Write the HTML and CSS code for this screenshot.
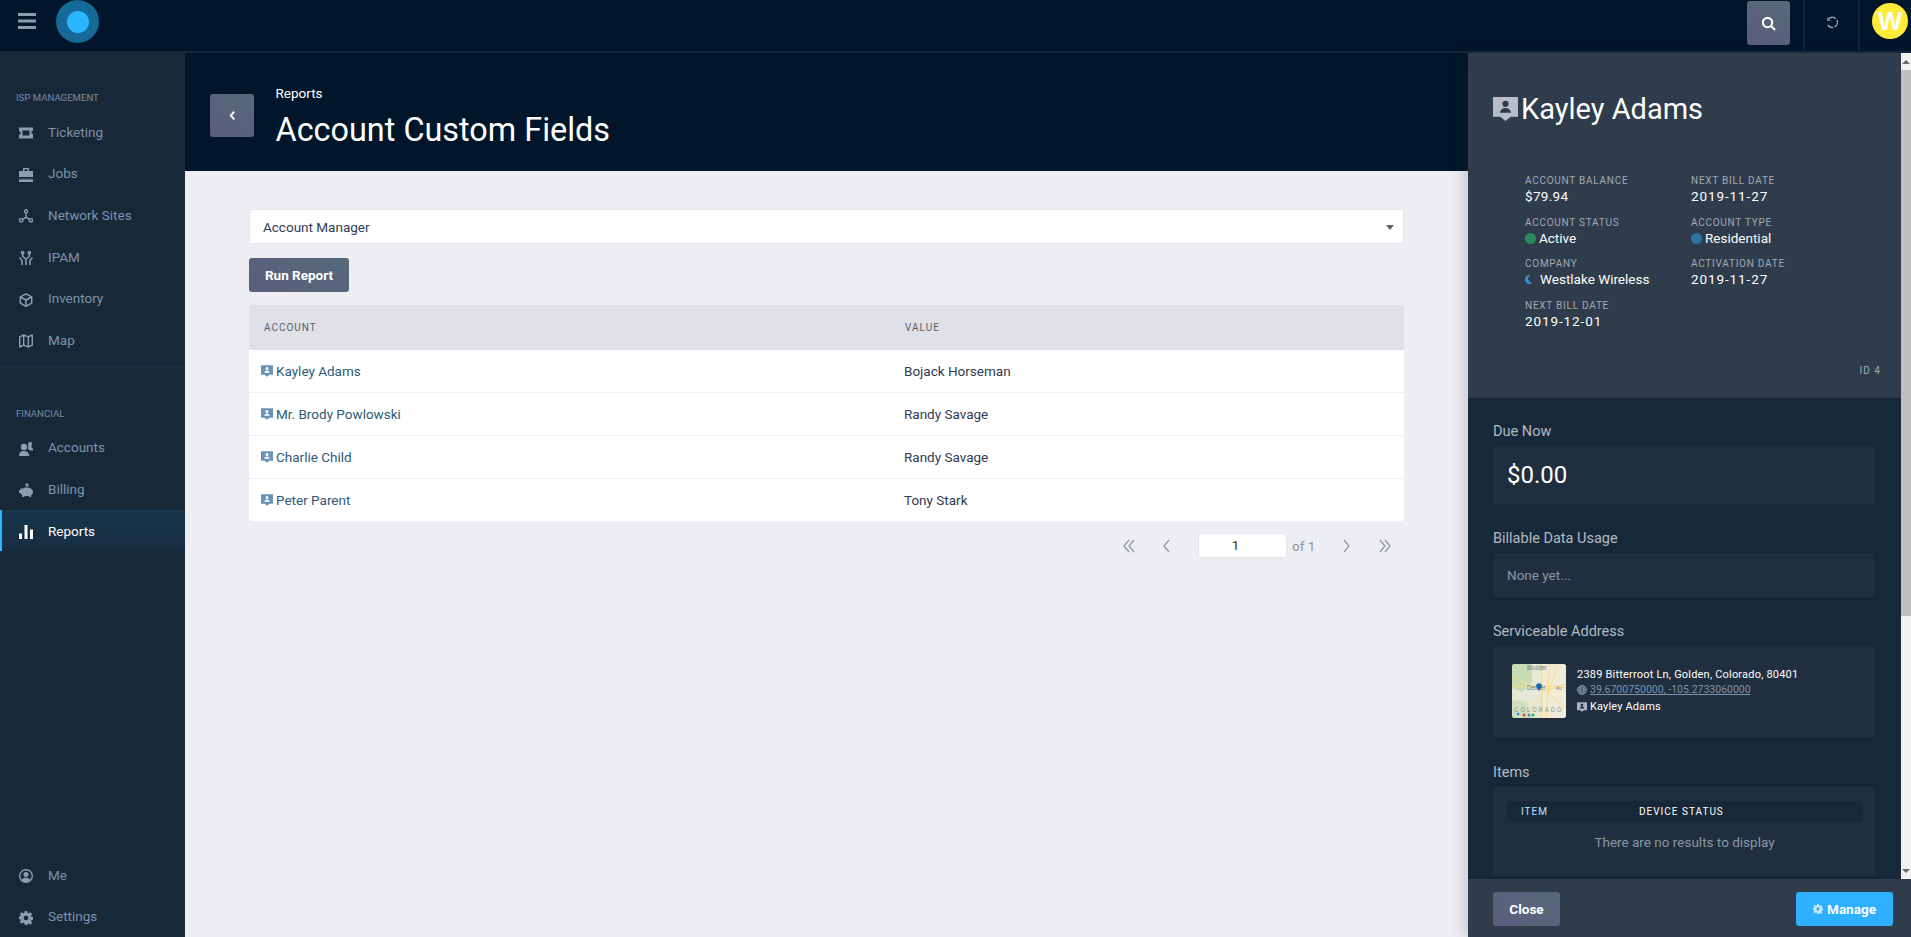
FILE: index.html
```html
<!DOCTYPE html>
<html lang="en">
<head>
<meta charset="utf-8">
<title>Account Custom Fields</title>
<link rel="stylesheet" href="styles.css">
</head>
<body>
<svg class="defs" width="0" height="0" aria-hidden="true">
  <symbol id="i-acct" viewBox="0 0 24 23"><path fill="currentColor" fill-rule="evenodd" d="M0 0h24v19h-7l-5 4-5-4H0zM12 3.500a3 3 0 1 0 0 6 3 3 0 0 0 0-6zM6.500 15h11c-.6-3-3-4.500-5.500-4.500S7.100 12 6.500 15z"/></symbol>
  <symbol id="i-gear" viewBox="0 0 16 16"><path fill="currentColor" fill-rule="evenodd" d="M6.500 0h3l.4 2.200 1.200.5L13 1.400l2.100 2.100-1.300 1.900.5 1.200 2.200.4v3l-2.200.4-.5 1.200 1.300 1.900-2.100 2.100-1.900-1.300-1.200.5L9.500 16h-3l-.4-2.200-1.200-.5L3 14.600.9 12.500l1.300-1.900-.5-1.200L-.5 9.500v-3l2.200-.4.5-1.200L.9 3.500 3 1.400l1.900 1.300 1.200-.5zM8 5.300a2.700 2.700 0 1 0 0 5.400 2.700 2.700 0 0 0 0-5.400z"/></symbol>
</svg>

<header class="topbar">
  <svg class="burger" viewBox="0 0 18 16"><path fill="#8d9db0" d="M0 0h18v3H0zM0 6.500h18v3H0zM0 13h18v3H0z"/></svg>
  <div class="logo"><span class="logo-core"></span></div>
  <div class="topbar-right">
    <button class="icon-btn grad">
      <svg viewBox="0 0 16 16" width="15" height="15"><circle cx="7" cy="7" r="5" fill="none" stroke="#fff" stroke-width="2.200"/><path d="M10.800 10.800 15 15" stroke="#fff" stroke-width="2.200"/></svg>
    </button>
    <div class="tb-cell">
      <svg viewBox="0 0 14 14" width="13" height="13"><path d="M2.500 3.500A5.500 5.500 0 1 1 2 9.500" fill="none" stroke="#8fa3b8" stroke-width="1.500" stroke-dasharray="9 1.500 9 1.500"/><path d="M1 1v4.500h4.500z" fill="#4c86bd"/></svg>
    </div>
    <div class="avatar-cell"><div class="avatar">W</div></div>
  </div>
</header>

<div class="shell">
  <nav class="sidebar">
    <div class="nav-title first">ISP MANAGEMENT</div>
    <a class="nav-item"><svg class="nav-ico" viewBox="0 0 14 14"><path fill="currentColor" fill-rule="evenodd" d="M0 1.500h14v3.300a1.700 1.700 0 0 0 0 3.400v4.300H0V8.700a1.700 1.700 0 0 0 0-3.400zM3.500 4.500v5h7v-5z"/></svg><span>Ticketing</span></a>
    <a class="nav-item"><svg class="nav-ico" viewBox="0 0 14 14"><path fill="currentColor" fill-rule="evenodd" d="M4.500 0h5l.6.5V3H14v6H0V3h3.900V.5zM5.500 1.300V3h3V1.300zM0 10.500h14V14H0z" /><path fill="#172839" d="M0 10.500h14v.9H0z"/></svg><span>Jobs</span></a>
    <a class="nav-item"><svg class="nav-ico" viewBox="0 0 14 14"><g fill="none" stroke="currentColor" stroke-width="1.400"><circle cx="7" cy="2.300" r="1.600"/><circle cx="2.200" cy="11.300" r="1.700"/><circle cx="11.800" cy="11.300" r="1.700"/><path d="M7 4v4.200M7 8.200 3.700 10.400M7 8.200l3.300 2.200"/></g></svg><span>Network Sites</span></a>
    <a class="nav-item"><svg class="nav-ico" viewBox="0 0 14 14"><g fill="none" stroke="currentColor" stroke-width="1.500"><circle cx="3.700" cy="1.700" r="1.100"/><circle cx="10.300" cy="1.700" r="1.100"/><path d="M3.700 3v2.500L7 8l3.300-2.500V3M7 8v6M.5 6.500l2.500 3V14M13.500 6.500l-2.500 3V14"/></g></svg><span>IPAM</span></a>
    <a class="nav-item"><svg class="nav-ico" viewBox="0 0 14 14"><g fill="none" stroke="currentColor" stroke-width="1.500" stroke-linejoin="round"><path d="M7 .8 12.700 3.800v6.400L7 13.300 1.300 10.200V3.800z"/><path d="M1.500 4 7 7l5.500-3M7 7v6"/></g></svg><span>Inventory</span></a>
    <a class="nav-item"><svg class="nav-ico" viewBox="0 0 14 14"><g fill="none" stroke="currentColor" stroke-width="1.400" stroke-linejoin="round"><path d="M.7 2.800 4.700 1l4.600 1.800L13.300 1v10.200l-4 1.800-4.600-1.800-4 1.800z"/><path d="M4.700 1v10.200M9.300 2.800V13"/></g></svg><span>Map</span></a>
    <div class="nav-rule"></div>
    <div class="nav-title">FINANCIAL</div>
    <a class="nav-item"><svg class="nav-ico" viewBox="0 0 14 14"><path fill="currentColor" d="M5 1.800a3.200 3.200 0 1 1 0 6.400 3.200 3.200 0 0 1 0-6.400zM0 14c0-3.500 2-5 5-5s5 1.500 5.500 5zM11 0a2 2 0 0 1 2 2.200c0 1.200-.6 2-.6 2.800 0 .6 1.600.7 1.600 2.500v1h-3.300c-.4-.7-1-1.200-1.800-1.500l.3-1.800c.3-.8.2-1.600-.2-2.400C9.200 1 9.800 0 11 0z"/></svg><span>Accounts</span></a>
    <a class="nav-item"><svg class="nav-ico" viewBox="0 0 14 14"><path fill="currentColor" d="M8 .3a1.700 1.700 0 1 1 0 3.400A1.700 1.700 0 0 1 8 .3zM1.500 5c.9 0 1.400.3 1.900.8C4.500 5 5.900 4.500 7.700 4.500c3.500 0 6.300 1.800 6.300 4.500 0 1.300-.7 2.300-1.700 3.100V14H10v-1.100H5.500V14H3.200v-2.100C2.300 11.300 1.800 10.700 1.400 10H0V7.200h1.100c.2-.4.400-.7.600-1z"/></svg><span>Billing</span></a>
    <a class="nav-item active"><svg class="nav-ico" viewBox="0 0 14 14"><path fill="currentColor" d="M0 8.500h3V14H0zM5.500 0h3v14h-3zM11 4.500h3V14h-3z"/></svg><span>Reports</span></a>
    <div class="nav-bottom">
      <a class="nav-item"><svg class="nav-ico" viewBox="0 0 14 14"><path fill="currentColor" fill-rule="evenodd" d="M7 0a7 7 0 1 1 0 14A7 7 0 0 1 7 0zm0 1.500a5.500 5.500 0 0 0-4.100 9.200C3.500 9.300 5.100 8.700 7 8.700s3.500.6 4.100 2A5.500 5.500 0 0 0 7 1.500zM7 3a2.500 2.500 0 1 1 0 5 2.500 2.500 0 0 1 0-5z"/></svg><span>Me</span></a>
      <a class="nav-item"><svg class="nav-ico"><use href="#i-gear"/></svg><span>Settings</span></a>
    </div>
  </nav>

  <main class="main">
    <section class="hero">
      <button class="back grad"><svg viewBox="0 0 8 12" width="7" height="11"><path d="M6 1.500 2 6l4 4.500" fill="none" stroke="#fff" stroke-width="2.200"/></svg></button>
      <div>
        <div class="crumb">Reports</div>
        <h1 class="title">Account Custom Fields</h1>
      </div>
    </section>
    <section class="content">
      <div class="select">Account Manager<span class="caret"></span></div>
      <button class="run grad">Run Report</button>
      <table class="report">
        <thead><tr><th class="c1">ACCOUNT</th><th>VALUE</th></tr></thead>
        <tbody>
          <tr><td class="c1"><a class="acct"><svg class="acct-ico"><use href="#i-acct"/></svg>Kayley Adams</a></td><td>Bojack Horseman</td></tr>
          <tr><td class="c1"><a class="acct"><svg class="acct-ico"><use href="#i-acct"/></svg>Mr. Brody Powlowski</a></td><td>Randy Savage</td></tr>
          <tr><td class="c1"><a class="acct"><svg class="acct-ico"><use href="#i-acct"/></svg>Charlie Child</a></td><td>Randy Savage</td></tr>
          <tr><td class="c1"><a class="acct"><svg class="acct-ico"><use href="#i-acct"/></svg>Peter Parent</a></td><td>Tony Stark</td></tr>
        </tbody>
      </table>
      <div class="pager">
        <svg class="pg" viewBox="0 0 12 14"><path d="M6 1 1 7l5 6M11 1 6 7l5 6"/></svg>
        <svg class="pg single" viewBox="0 0 12 14"><path d="M9 1 4 7l5 6"/></svg>
        <div class="pg-input">1</div>
        <span class="pg-of">of 1</span>
        <svg class="pg single next" viewBox="0 0 12 14"><path d="m3 1 5 6-5 6"/></svg>
        <svg class="pg" viewBox="0 0 12 14"><path d="m1 1 5 6-5 6M6 1l5 6-5 6"/></svg>
      </div>
    </section>
  </main>

  <aside class="drawer">
    <div class="drawer-scroll">
      <div class="drawer-body">
        <div class="card-head">
          <h2 class="name"><svg class="name-ico"><use href="#i-acct"/></svg>Kayley Adams</h2>
          <div class="stats">
            <div class="stat"><div class="k">ACCOUNT BALANCE</div><div class="v num">$79.94</div></div>
            <div class="stat"><div class="k">NEXT BILL DATE</div><div class="v date">2019-11-27</div></div>
            <div class="stat"><div class="k">ACCOUNT STATUS</div><div class="v"><i class="dot green"></i>Active</div></div>
            <div class="stat"><div class="k">ACCOUNT TYPE</div><div class="v"><i class="dot blue"></i>Residential</div></div>
            <div class="stat"><div class="k">COMPANY</div><div class="v"><i class="moon"></i>Westlake Wireless</div></div>
            <div class="stat"><div class="k">ACTIVATION DATE</div><div class="v date">2019-11-27</div></div>
            <div class="stat"><div class="k">NEXT BILL DATE</div><div class="v date">2019-12-01</div></div>
          </div>
          <div class="rec-id">ID 4</div>
        </div>
        <div class="sections">
          <div class="sec-label">Due Now</div>
          <div class="box due">$0.00</div>
          <div class="sec-label">Billable Data Usage</div>
          <div class="box none">None yet...</div>
          <div class="sec-label">Serviceable Address</div>
          <div class="box addr">
            <svg class="map" viewBox="0 0 54 54">
              <rect width="54" height="54" fill="#e4e9d8"/>
              <path d="M0 0h20v18L10 28 0 24z" fill="#c8dcb4"/><path d="M0 36l14 2 6 16H0z" fill="#cfe0bf"/><path d="M30 0h24v54H30z" fill="#f1ecd8"/>
              <g fill="none" stroke="#f8dd80" stroke-width="1"><path d="M30 0v54M38 0l-4 54M0 22c14 2 30-2 54 2M12 54l18-26 24-8M46 0 36 30l18 14M2 14l22 10"/></g>
              <g fill="#6f7378" font-family="Inter, sans-serif"><text x="15" y="6" font-size="5.500">Boulder</text><text x="15" y="26" font-size="5.500">Denver</text><text x="44" y="26" font-size="4.500">Au</text><text x="2" y="48" font-size="6" letter-spacing="2" fill="#8b8f92">COLORADO</text></g>
              <circle cx="27" cy="22" r="2.800" fill="#0b6cb5"/><path d="m25 24 2 3 2-3z" fill="#0b6cb5"/>
              <circle cx="6" cy="50" r="1.500" fill="#4a8af4"/><circle cx="12" cy="51" r="1.500" fill="#ea4335"/><circle cx="17" cy="51" r="1.500" fill="#4a8af4"/><circle cx="21" cy="51" r="1.500" fill="#34a853"/>
            </svg>
            <div class="addr-lines">
              <div class="addr-1">2389 Bitterroot Ln, Golden, Colorado, 80401</div>
              <div class="addr-2"><svg class="globe" viewBox="0 0 10 10"><g fill="none" stroke="#8ea3ba" stroke-width=".9"><circle cx="5" cy="5" r="4.400"/><ellipse cx="5" cy="5" rx="2" ry="4.400"/><path d="M.6 5h8.800M1.200 3h7.600M1.200 7h7.600"/></g></svg><a>39.6700750000, -105.2733060000</a></div>
              <div class="addr-3"><svg class="mini-acct"><use href="#i-acct"/></svg>Kayley Adams</div>
            </div>
          </div>
          <div class="sec-label">Items</div>
          <div class="box items">
            <div class="items-head"><span class="ih1">ITEM</span><span>DEVICE STATUS</span></div>
            <div class="items-none">There are no results to display</div>
          </div>
        </div>
      </div>
      <div class="scrollbar">
        <div class="sb-btn"><i class="sb-up"></i></div>
        <div class="sb-track"><div class="sb-thumb"></div></div>
        <div class="sb-btn"><i class="sb-down"></i></div>
      </div>
    </div>
    <div class="drawer-foot">
      <button class="foot-btn grad">Close</button>
      <button class="foot-btn manage"><svg class="manage-ico"><use href="#i-gear"/></svg>Manage</button>
    </div>
  </aside>
</div>
</body>
</html>
```

FILE: styles.css
```css
* { box-sizing: border-box; }
html, body { height: 100%; }
body {
  margin: 0;
  height: 937px;
  overflow: hidden;
  display: flex;
  flex-direction: column;
  font-family: Roboto, "Liberation Sans", sans-serif;
  font-size: 13.500px;
  background: #edeef2;
  color: #2c3648;
}
button { font-family: inherit; border: 0; padding: 0; }
h1, h2 { margin: 0; font-weight: 400; }
.defs { position: absolute; }
.grad { background: linear-gradient(30deg, #5b5d7c 0%, #56697b 100%); color: #fff; }

.topbar {
  height: 53px;
  flex: none;
  display: flex;
  align-items: flex-start;
  background: #01162a;
  border-bottom: 2px solid #16263a;
}
.burger { width: 18px; height: 16px; margin: 13px 0 0 18px; }
.logo {
  width: 43px; height: 43px;
  margin: 0 0 0 20px;
  border-radius: 50%;
  background: #156a99;
  display: flex; align-items: center; justify-content: center;
}
.logo-core { width: 22px; height: 22px; border-radius: 50%; background: #2cb5ff; }
.topbar-right { margin-left: auto; display: flex; align-items: stretch; height: 51px; }
.icon-btn {
  width: 43px; height: 44px;
  margin: 1px 13px 0 0;
  border-radius: 3px;
  display: flex; align-items: center; justify-content: center;
}
.tb-cell {
  width: 57px;
  border-left: 2px solid #12243a;
  border-right: 2px solid #12243a;
  display: flex; align-items: center; justify-content: center;
  padding: 0 0 7px 1px;
}
.avatar-cell { width: 51px; padding: 3px 0 0 12px; }
.avatar {
  width: 36px; height: 36px;
  border-radius: 50%;
  background: #ffeb38;
  color: #fff;
  font: 700 26px/36px "Liberation Sans", sans-serif;
  text-align: center;
}

.shell { flex: 1; display: flex; min-height: 0; }

.sidebar {
  width: 185px;
  flex: none;
  background: #172839;
  display: flex;
  flex-direction: column;
  padding-top: 38px;
}
.nav-title {
  font-size: 9.600px;
  line-height: 14px;
  color: #7a8ca2;
  padding-left: 16px;
  margin: 39px 0 6px;
}
.nav-title.first { margin-top: 0; }
.nav-rule { height: 2px; background: #1f3043; margin-top: 5px; }
.nav-item {
  height: 41.600px;
  flex: none;
  display: flex;
  align-items: center;
  padding-left: 19px;
  color: #7f93ab;
  font-size: 13.500px;
}
.nav-ico { width: 14px; height: 14px; margin: 3px 15px 0 0; flex: none; color: #8d9cae; }
.nav-item.active {
  color: #fff;
  padding-left: 17px;
  border-left: 2px solid #2db5ff;
  background: linear-gradient(180deg, #18354c 0%, #172c41 100%);
}
.nav-item.active .nav-ico { color: #fff; }
.nav-bottom { margin-top: auto; }

.main { flex: 1; min-width: 0; }
.hero {
  height: 118px;
  background: #01162a;
  display: flex;
  align-items: flex-start;
  padding: 31px 0 0 25px;
  color: #fff;
}
.back {
  width: 44px; height: 43px;
  border-radius: 3px;
  margin: 10px 21.500px 0 0;
  display: flex; align-items: center; justify-content: center;
}
.crumb { font-size: 13.500px; line-height: 18px; }
.title { font-size: 32.400px; line-height: 40px; margin-top: 8px; }

.content { padding: 38px 64px 0; }
.select {
  height: 35px;
  background: #fff;
  border: 1px solid #e3e5ea;
  border-radius: 3px;
  padding-left: 13px;
  line-height: 34px;
  color: #2f3c58;
  position: relative;
}
.caret {
  position: absolute; right: 9px; top: 15px;
  border: 4px solid transparent;
  border-top: 5px solid #5a6270;
  border-bottom: 0;
}
.run {
  display: block;
  width: 100px; height: 34px;
  margin: 14px 0 13px;
  border-radius: 3px;
  font-weight: 700;
  font-size: 13.500px;
}
.report {
  width: 100%;
  table-layout: fixed;
  border-collapse: separate;
  border-spacing: 0;
  border-radius: 3px;
  overflow: hidden;
  background: #fff;
}
.report th {
  height: 45px;
  background: #dfe1e6;
  text-align: left;
  font-size: 10px;
  font-weight: 400;
  letter-spacing: 1px;
  color: #555d6b;
  padding: 0 0 0 15px;
}
.report td {
  height: 43px;
  padding: 0 0 1px 14px;
  border-top: 1px solid #eceef1;
  color: #323b52;
}
.report tbody tr:first-child td { border-top: 0; height: 42px; }
.report .c1 { width: 641px; }
.report td.c1 { padding-left: 12px; }
.acct { display: flex; align-items: center; color: #2f5a78; }
.acct-ico { width: 12px; height: 12px; color: #6a93b5; margin-right: 3px; flex: none; }

.pager { display: flex; align-items: center; margin-top: 12px; height: 25px; padding-left: 874px; }
.pg { width: 12px; height: 14px; fill: none; stroke: #8f949c; stroke-width: 1.200; flex: none; margin-right: 25px; }
.pg.single { margin-right: 26px; }
.pg.next { margin-right: 26.500px; }
.pg-input {
  width: 89px; height: 25px;
  flex: none;
  background: #fff;
  border: 1px solid #e4e6ea;
  border-radius: 3px;
  text-align: center;
  line-height: 23px;
  padding-right: 14px;
  color: #333;
}
.pg-of { color: #8f949c; margin: 0 25.500px 0 5px; white-space: nowrap; }

.drawer {
  width: 443px;
  flex: none;
  display: flex;
  flex-direction: column;
  box-shadow: -6px 0 10px rgba(40, 50, 60, .15);
  position: relative;
  background: #172839;
}
.drawer-scroll { flex: 1; display: flex; min-height: 0; }
.drawer-body { flex: 1; min-width: 0; overflow: hidden; }
.card-head {
  height: 345px;
  background: #2e3c4c;
  padding: 37px 20px 0 25px;
  position: relative;
  color: #fff;
}
.name { font-size: 29px; line-height: 38px; display: flex; align-items: center; }
.name-ico { width: 25px; height: 24px; color: #b8bec6; margin-right: 3px; }
.stats {
  display: grid;
  grid-template-columns: 166px 166px;
  grid-auto-rows: 41.700px;
  margin: 46px 0 0 32px;
}
.k { font-size: 10px; line-height: 14px; letter-spacing: .75px; color: #a2aab4; }
.v { font-size: 13.500px; line-height: 17px; color: #fff; display: flex; align-items: center; }
.v.num { letter-spacing: .3px; }
.v.date { letter-spacing: .9px; }
.dot { width: 11px; height: 11px; border-radius: 50%; margin-right: 3px; flex: none; }
.green { background: #2b8a5c; }
.blue { background: #2f74a8; }
.moon {
  width: 9px; height: 9px; border-radius: 50%;
  margin-right: 6px; flex: none;
  background: radial-gradient(circle at 85% 40%, #2e3c4c 0 45%, #3a8ccb 47%);
}
.rec-id { position: absolute; right: 20px; top: 312px; font-size: 10px; letter-spacing: 1px; color: #a2aab4; }

.sections { padding: 24px 26px 0 25px; }
.sec-label { font-size: 14.500px; line-height: 18px; color: #b3bac2; padding-top: 1px; height: 18px; margin-bottom: 6px; }
.box { background: #1f2f3f; border-radius: 3px; margin-bottom: 25px; }
.due { height: 58px; padding-left: 14px; font-size: 24px; line-height: 58px; color: #fff; }
.none { height: 44px; padding-left: 14px; line-height: 44px; color: #8c97a3; margin-bottom: 25px; }
.addr { height: 91px; padding: 18px 0 0 19px; display: flex; margin-bottom: 26px; }
.map { width: 54px; height: 54px; border-radius: 3px; flex: none; }
.addr-lines { margin-left: 11px; color: #fff; font-size: 11px; padding-top: 3px; }
.addr-1 { line-height: 16px; letter-spacing: .2px; }
.addr-2 { line-height: 14px; display: flex; align-items: center; color: #7f93ab; font-size: 10.500px; }
.addr-2 a { text-decoration: underline; }
.globe { width: 10px; height: 10px; margin-right: 3px; }
.addr-3 { line-height: 18px; margin-top: 1px; display: flex; align-items: center; letter-spacing: .15px; }
.mini-acct { width: 10px; height: 10px; color: #aab2bc; margin-right: 3px; }
.items { height: 89px; padding: 14px 13px 0 14px; margin-bottom: 0; }
.items-head {
  height: 21px;
  background: #172839;
  border-radius: 3px;
  display: flex;
  align-items: center;
  padding-left: 14px;
  font-size: 10px;
  letter-spacing: 1px;
  color: #fff;
}
.ih1 { width: 118px; color: #bfe6ff; }
.items-none { text-align: center; color: #8c97a3; line-height: 18px; margin-top: 11px; }

.scrollbar { width: 10px; flex: none; background: #f1f1f1; display: flex; flex-direction: column; }
.sb-btn { height: 17px; display: flex; align-items: center; justify-content: center; flex: none; }
.sb-up { border: 4px solid transparent; border-bottom: 4px solid #6b6b6b; border-top: 0; }
.sb-down { border: 4px solid transparent; border-top: 4px solid #6b6b6b; border-bottom: 0; }
.sb-track { flex: 1; }
.sb-thumb { height: 546px; background: #c1c1c1; }

.drawer-foot {
  height: 58px;
  flex: none;
  background: #2e3c4c;
  display: flex;
  justify-content: space-between;
  align-items: flex-start;
  padding: 13px 18px 0 25px;
}
.foot-btn { height: 34px; border-radius: 3px; font-weight: 700; font-size: 13.500px; }
.foot-btn.grad { width: 67px; }
.manage {
  width: 97px;
  background: #2cb0ff;
  color: #fff;
  display: flex; align-items: center; justify-content: center;
}
.manage-ico { width: 10px; height: 10px; margin-right: 4px; color: #cfe9fb; }
```
